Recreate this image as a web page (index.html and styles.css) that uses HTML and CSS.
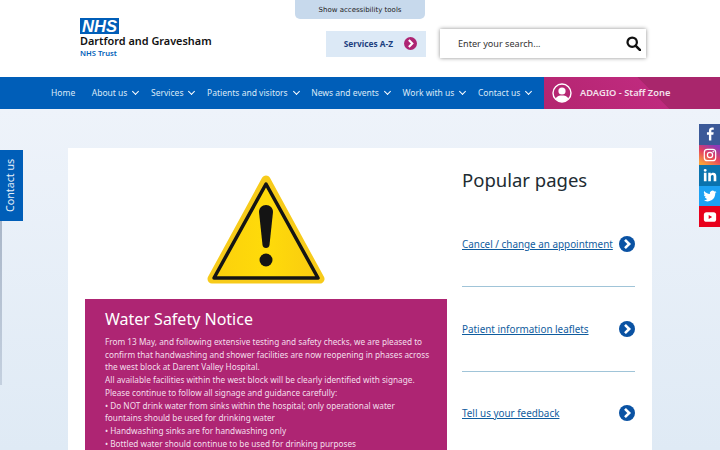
FILE: index.html
```html
<!DOCTYPE html>
<html lang="en">
<head>
  <meta charset="UTF-8">
  <meta name="viewport" content="width=device-width, initial-scale=1.0">
  <title>Dartford and Gravesham NHS Trust</title>
  <link rel="stylesheet" href="styles.css">
</head>
<body>
  <button class="access-tab">Show accessibility tools</button>

  <header class="site-header">
    <a class="logo" href="#">
      <svg class="logo-nhs" viewBox="0 0 39 16"><rect width="39" height="16" fill="#005eb8"/><text x="2" y="13.8" textLength="35" lengthAdjust="spacingAndGlyphs">NHS</text></svg>
      <span class="logo-name">Dartford and Gravesham</span>
      <span class="logo-trust">NHS Trust</span>
    </a>
    <div class="header-tools">
      <a class="az-link" href="#">
        Services A-Z
        <svg class="chev-icon" viewBox="0 0 16 16"><circle cx="8" cy="8" r="8" fill="#ae2573"/><path d="M6 3.8 10.2 8 6 12.2" fill="none" stroke="#fff" stroke-width="2.6"/></svg>
      </a>
      <div class="search-box">
        <span class="search-text">Enter your search...</span>
        <svg class="search-icon" viewBox="0 0 16 16"><circle cx="6.6" cy="6.6" r="5" fill="none" stroke="#111" stroke-width="2.4"/><path d="M10.2 10.2 15 15" stroke="#111" stroke-width="2.8" stroke-linecap="round"/></svg>
      </div>
    </div>
  </header>

  <nav class="main-nav">
    <ul class="nav-list">
      <li class="nav-home"><a href="#">Home</a></li>
      <li class="has-sub"><a href="#">About us</a></li>
      <li class="has-sub"><a href="#">Services</a></li>
      <li class="has-sub"><a href="#">Patients and visitors</a></li>
      <li class="has-sub"><a href="#">News and events</a></li>
      <li class="has-sub"><a href="#">Work with us</a></li>
      <li class="has-sub"><a href="#">Contact us</a></li>
    </ul>
    <a class="staff-zone" href="#">
      <svg class="staff-icon" viewBox="0 0 20 20"><circle cx="10" cy="10" r="9" fill="none" stroke="#fff" stroke-width="1.4"/><circle cx="10" cy="8" r="3.6" fill="#fff"/><path d="M3.6 15.6C5 12.8 7.4 12.4 10 12.4s5 .4 6.4 3.2A9 9 0 0 1 10 19a9 9 0 0 1-6.4-3.4Z" fill="#fff"/></svg>
      ADAGIO - Staff Zone
    </a>
  </nav>

  <a class="contact-tab" href="#">Contact us</a>
  <div class="edge-shadow"></div>

  <div class="social-bar">
    <a class="soc soc-fb" href="#"><svg viewBox="0 0 16 16"><path d="M9.5 15.5V8.800h2.300l.4-2.700H9.500V4.500c0-.8.3-1.300 1.400-1.300h1.400V.8C11.900.7 11.200.6 10.400.6 8.300.6 6.800 1.900 6.800 4.200v1.900H4.500v2.700h2.300v6.700Z" fill="#fff"/></svg></a>
    <a class="soc soc-ig" href="#"><svg viewBox="0 0 16 16"><rect x="1.500" y="1.500" width="13" height="13" rx="3.500" fill="none" stroke="#fff" stroke-width="1.400"/><circle cx="8" cy="8" r="3" fill="none" stroke="#fff" stroke-width="1.400"/><circle cx="11.700" cy="4.300" r=".9" fill="#fff"/></svg></a>
    <a class="soc soc-in" href="#"><svg viewBox="0 0 16 16"><path d="M1 5.500h3V15H1ZM2.500 1a1.700 1.700 0 1 1 0 3.400 1.700 1.700 0 0 1 0-3.400ZM6 5.500h2.900v1.300c.5-.9 1.500-1.500 2.900-1.500 2.400 0 3.400 1.500 3.400 4V15h-3v-5c0-1.300-.4-2-1.500-2-1.200 0-1.700.8-1.700 2v5H6Z" fill="#fff"/></svg></a>
    <a class="soc soc-tw" href="#"><svg viewBox="0 0 16 16"><path d="M15.500 3.300c-.6.3-1.200.4-1.800.5.600-.4 1.100-1 1.400-1.700-.6.400-1.300.6-2 .8a3.100 3.100 0 0 0-5.300 2.800C5.200 5.600 2.900 4.300 1.400 2.400c-.8 1.400-.4 3.200 1 4.100-.5 0-1-.2-1.400-.4 0 1.500 1.100 2.800 2.500 3.100-.5.100-1 .1-1.400 0 .4 1.300 1.600 2.100 2.900 2.200A6.300 6.300 0 0 1 .5 12.700 8.800 8.800 0 0 0 14 4.900c.6-.4 1.100-1 1.500-1.600Z" fill="#fff"/></svg></a>
    <a class="soc soc-yt" href="#"><svg viewBox="0 0 16 16"><rect x="1" y="2.500" width="14" height="11" rx="3" fill="#fff"/><path d="M6.500 5.600v4.800l4-2.400Z" fill="#e8001c"/></svg></a>
  </div>

  <main class="page-body">
    <div class="card">
      <section class="main-col">
        <div class="warning-image">
          <svg class="warning-sign" viewBox="0 0 118 110">
            <defs>
              <linearGradient id="signFill" x1="0" y1="0" x2="1" y2="0">
                <stop offset="0" stop-color="#fbd00c"/>
                <stop offset=".5" stop-color="#ffdb0a"/>
                <stop offset="1" stop-color="#f9cb10"/>
              </linearGradient>
            </defs>
            <path d="M59 5 113 104H5Z" fill="#f7cb1a" stroke="#f7cb1a" stroke-width="9" stroke-linejoin="round"/>
            <path d="M59 9 111 103H7Z" fill="url(#signFill)" stroke="#141414" stroke-width="3.500" stroke-linejoin="round"/>
            <path d="M52 37c0-4 3-7 7-7s7 3 7 7l-3.500 33c-.3 2-1.500 3-3.500 3s-3.200-1-3.500-3Z" fill="#141414"/>
            <circle cx="59" cy="85" r="6.500" fill="#141414"/>
          </svg>
        </div>
        <div class="notice">
          <h2>Water Safety Notice</h2>
          <p>From 13 May, and following extensive testing and safety checks, we are pleased to confirm that handwashing and shower facilities are now reopening in phases across the west block at Darent Valley Hospital.<br>
          All available facilities within the west block will be clearly identified with signage.<br>
          Please continue to follow all signage and guidance carefully:<br>
          • Do NOT drink water from sinks within the hospital; only operational water fountains should be used for drinking water<br>
          • Handwashing sinks are for handwashing only<br>
          • Bottled water should continue to be used for drinking purposes</p>
        </div>
      </section>

      <aside class="side-col">
        <h2>Popular pages</h2>
        <ul class="popular-list">
          <li><a href="#">Cancel / change an appointment</a><svg class="chev-icon" viewBox="0 0 16 16"><circle cx="8" cy="8" r="8" fill="#0a52a3"/><path d="M6 3.800 10.200 8 6 12.200" fill="none" stroke="#fff" stroke-width="2.600"/></svg></li>
          <li><a href="#">Patient information leaflets</a><svg class="chev-icon" viewBox="0 0 16 16"><circle cx="8" cy="8" r="8" fill="#0a52a3"/><path d="M6 3.800 10.200 8 6 12.200" fill="none" stroke="#fff" stroke-width="2.600"/></svg></li>
          <li><a href="#">Tell us your feedback</a><svg class="chev-icon" viewBox="0 0 16 16"><circle cx="8" cy="8" r="8" fill="#0a52a3"/><path d="M6 3.800 10.200 8 6 12.200" fill="none" stroke="#fff" stroke-width="2.600"/></svg></li>
        </ul>
      </aside>
    </div>
  </main>
</body>
</html>
```

FILE: styles.css
```css
/* Reset and Base Styles */
* {
  margin: 0;
  padding: 0;
  box-sizing: border-box;
}

html, body {
  height: 450px;
  overflow: hidden;
}

body {
  font-family: 'Noto Sans', sans-serif;
  background: linear-gradient(#eef3fa 109px, #dfeaf5 450px);
  color: #212b32;
  position: relative;
}

a {
  text-decoration: none;
  color: inherit;
}

ul {
  list-style: none;
}

/* Accessibility tab */
.access-tab {
  position: absolute;
  top: 0;
  left: 295px;
  width: 130px;
  height: 19px;
  border: none;
  background: #c7d9ec;
  border-radius: 0 0 5px 5px;
  font-family: 'DejaVu Sans', sans-serif;
  font-size: 7px;
  color: #222;
}

/* Header */
.site-header {
  height: 77px;
  background: #fff;
  display: flex;
  justify-content: space-between;
  padding: 18px 74px 0 80px;
}

.logo {
  display: flex;
  flex-direction: column;
  align-items: flex-start;
}

.logo-nhs {
  width: 39px;
  height: 16px;
  flex-shrink: 0;
  overflow: visible;
}

.logo-nhs text {
  fill: #fff;
  font-family: 'Liberation Sans', sans-serif;
  font-weight: bold;
  font-style: italic;
  font-size: 16px;
}

.logo-name {
  font-weight: 600;
  font-size: 10.9px;
  line-height: 14px;
  color: #111;
  white-space: nowrap;
}

.logo-trust {
  font-weight: 600;
  font-size: 7.6px;
  line-height: 10px;
  color: #005eb8;
}

.header-tools {
  display: flex;
  align-items: flex-start;
  gap: 14px;
  padding-top: 11px;
}

.az-link {
  margin-top: 2px;
  width: 100px;
  height: 26px;
  background: #dce9f6;
  display: flex;
  align-items: center;
  justify-content: flex-end;
  gap: 11px;
  padding: 0 9px 1px 0;
  font-weight: 700;
  font-size: 8.3px;
  color: #1d3f7f;
}

.chev-icon {
  width: 16px;
  height: 16px;
  flex-shrink: 0;
}

.az-link .chev-icon {
  width: 13px;
  height: 13px;
}

.search-box {
  width: 206px;
  height: 29px;
  background: #fff;
  box-shadow: 0 0 4px rgba(0, 0, 0, 0.45);
  display: flex;
  align-items: center;
  justify-content: space-between;
  padding: 0 5px 0 18px;
}

.search-text {
  font-size: 9.1px;
  color: #333;
}

.search-icon {
  width: 15px;
  height: 15px;
}

/* Navigation */
.main-nav {
  height: 32px;
  background: #005eb8;
  display: flex;
  justify-content: space-between;
  padding-left: 51px;
}

.nav-list {
  display: flex;
  align-items: center;
  gap: 12.6px;
  padding-bottom: 1px;
}

.nav-list li {
  font-size: 8.5px;
  color: #dbe9f7;
  white-space: nowrap;
}

.nav-list li.nav-home {
  margin-right: 4px;
}

.nav-list li.has-sub::after {
  content: "";
  display: inline-block;
  width: 4px;
  height: 4px;
  border-right: 1.5px solid #fff;
  border-bottom: 1.5px solid #fff;
  transform: rotate(45deg);
  margin: 0 0 2px 6px;
}

.staff-zone {
  width: 176px;
  flex-shrink: 0;
  background: linear-gradient(45deg, #b3256f 0%, #bf2a7e 60%, #a9266c 60.500%);
  display: flex;
  align-items: center;
  gap: 8px;
  padding: 0 0 1px 8px;
  font-weight: 600;
  font-size: 9.3px;
  color: #f3e1ec;
  white-space: nowrap;
}

.staff-icon {
  width: 20px;
  height: 20px;
}

/* Floating tabs */
.contact-tab {
  position: absolute;
  left: 0;
  top: 150px;
  width: 23px;
  height: 71px;
  background: #005eb8;
  color: #e4eef8;
  font-size: 10.7px;
  writing-mode: vertical-rl;
  transform: rotate(180deg);
  display: flex;
  align-items: center;
  justify-content: center;
  padding-left: 3px;
}

.edge-shadow {
  position: absolute;
  left: 0;
  top: 221px;
  width: 2px;
  height: 164px;
  background: linear-gradient(#a9b6c8, #c4d0df);
}

.social-bar {
  position: absolute;
  right: 0;
  top: 124px;
  width: 21px;
  display: flex;
  flex-direction: column;
}

.soc {
  height: 20.6px;
  display: flex;
  align-items: center;
  justify-content: center;
}

.soc svg {
  width: 14px;
  height: 14px;
}

.soc-fb { background: #3b5998; }
.soc-ig { background: linear-gradient(30deg, #f9a13b 10%, #e4405f 50%, #8a3ab9 90%); }
.soc-in { background: #0a73ae; }
.soc-tw { background: #1da1f2; }
.soc-yt { background: #e8001c; }

/* Page content */
.page-body {
  padding: 39px 68px 0;
}

.card {
  background: #fff;
  display: flex;
  height: 400px;
  padding: 0 17px;
  gap: 15px;
}

.main-col {
  width: 362px;
  flex-shrink: 0;
}

.warning-image {
  height: 151px;
  display: flex;
  justify-content: center;
  padding-top: 27px;
}

.warning-sign {
  width: 118px;
  height: 110px;
}

.notice {
  background: #ae2573;
  color: #f3dfeb;
  padding: 8px 17px 8px 20px;
}

.notice h2 {
  font-weight: 400;
  font-size: 16px;
  line-height: 24px;
  color: #fff;
  margin-bottom: 5px;
}

.notice p {
  font-size: 8.24px;
  line-height: 12.700px;
}

.side-col {
  flex: 1;
}

.side-col h2 {
  font-weight: 400;
  font-size: 18.5px;
  line-height: 27px;
  margin-top: 18px;
  color: #212b32;
}

.popular-list {
  margin-top: 9px;
}

.popular-list li {
  height: 85px;
  display: flex;
  align-items: center;
  justify-content: space-between;
  border-bottom: 1px solid #a0c4d8;
}

.popular-list li:last-child {
  height: 83px;
  border-bottom-color: transparent;
}

.popular-list a {
  font-size: 9.900px;
  color: #0f5c9e;
  text-decoration: underline;
}
```
